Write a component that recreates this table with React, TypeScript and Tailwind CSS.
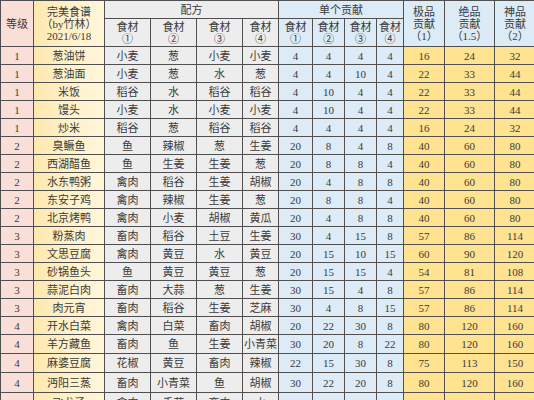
import React from "react";

type Row = [string, string, string, string, string, string, string, string, string, string, string, string, string];

const rows: Row[] = [
  ["1", "葱油饼", "小麦", "葱", "小麦", "小麦", "4", "4", "4", "4", "16", "24", "32"],
  ["1", "葱油面", "小麦", "葱", "水", "葱", "4", "4", "10", "4", "22", "33", "44"],
  ["1", "米饭", "稻谷", "水", "稻谷", "稻谷", "4", "10", "4", "4", "22", "33", "44"],
  ["1", "馒头", "小麦", "水", "小麦", "小麦", "4", "10", "4", "4", "22", "33", "44"],
  ["1", "炒米", "稻谷", "葱", "稻谷", "稻谷", "4", "4", "4", "4", "16", "24", "32"],
  ["2", "臭鳜鱼", "鱼", "辣椒", "葱", "生姜", "20", "8", "4", "8", "40", "60", "80"],
  ["2", "西湖醋鱼", "鱼", "生姜", "生姜", "葱", "20", "8", "8", "4", "40", "60", "80"],
  ["2", "水东鸭粥", "禽肉", "稻谷", "生姜", "胡椒", "20", "4", "8", "8", "40", "60", "80"],
  ["2", "东安子鸡", "禽肉", "辣椒", "生姜", "葱", "20", "8", "8", "4", "40", "60", "80"],
  ["2", "北京烤鸭", "禽肉", "小麦", "胡椒", "黄瓜", "20", "4", "8", "8", "40", "60", "80"],
  ["3", "粉蒸肉", "畜肉", "稻谷", "土豆", "生姜", "30", "4", "15", "8", "57", "86", "114"],
  ["3", "文思豆腐", "禽肉", "黄豆", "水", "黄豆", "20", "15", "10", "15", "60", "90", "120"],
  ["3", "砂锅鱼头", "鱼", "黄豆", "黄豆", "葱", "20", "15", "15", "4", "54", "81", "108"],
  ["3", "蒜泥白肉", "畜肉", "大蒜", "葱", "生姜", "30", "15", "4", "8", "57", "86", "114"],
  ["3", "肉元宵", "畜肉", "稻谷", "生姜", "芝麻", "30", "4", "8", "15", "57", "86", "114"],
  ["4", "开水白菜", "禽肉", "白菜", "畜肉", "胡椒", "20", "22", "30", "8", "80", "120", "160"],
  ["4", "羊方藏鱼", "畜肉", "鱼", "生姜", "小青菜", "30", "20", "8", "22", "80", "120", "160"],
  ["4", "麻婆豆腐", "花椒", "黄豆", "畜肉", "辣椒", "22", "15", "30", "8", "75", "113", "150"],
  ["4", "沔阳三蒸", "畜肉", "小青菜", "鱼", "胡椒", "30", "22", "20", "8", "80", "120", "160"],
  ["4", "飞龙汤", "禽肉", "香菇", "畜肉", "水", "20", "22", "30", "10", "82", "123", "164"],
];

const bgFor = (i: number) => {
  if (i === 0) return "bg-[#fadfd9]";
  if (i === 1) return "bg-gradient-to-r from-[#fde8ae] via-[#fff1c9] to-[#fff5da]";
  if (i < 6) return "bg-[#ededed]";
  if (i < 10) return "bg-[#ddebf7]";
  return "bg-[#ffe390]";
};

const cell = "flex items-center justify-center text-center whitespace-nowrap overflow-hidden";

export default function App() {
  return (
    <div className="w-[534px] h-[400px] overflow-hidden bg-white">
      <div className="grid w-max gap-px bg-[#505050] p-px grid-cols-[32px_70px_45px_45px_45px_35px_33px_31px_31px_26px_40px_49px_40px] grid-rows-[17px_27px_repeat(16,17px)_18px_18px_19px_20px] font-['Liberation_Serif','Noto_Sans_CJK_SC',serif] text-[11px] leading-[12px] text-[#3a3a3a]">
        <div className={`${cell} row-span-2 bg-[#fadfd9]`}>等级</div>
        <div className={`${cell} row-span-2 flex-col bg-gradient-to-r from-[#fde8ae] via-[#fff1c9] to-[#fff5da]`}>
          <span>完美食谱</span>
          <span>（by竹林）</span>
          <span>2021/6/18</span>
        </div>
        <div className={`${cell} col-span-4 bg-[#ededed]`}>配方</div>
        <div className={`${cell} col-span-4 bg-[#ddebf7]`}>单个贡献</div>
        <div className={`${cell} row-span-2 flex-col bg-[#ddebf7]`}>
          <span>极品</span>
          <span>贡献</span>
          <span>（1）</span>
        </div>
        <div className={`${cell} row-span-2 flex-col bg-[#ddebf7]`}>
          <span>绝品</span>
          <span>贡献</span>
          <span>（1.5）</span>
        </div>
        <div className={`${cell} row-span-2 flex-col bg-[#ddebf7]`}>
          <span>神品</span>
          <span>贡献</span>
          <span>（2）</span>
        </div>
        {["①", "②", "③", "④", "①", "②", "③", "④"].map((c, i) => (
          <div key={i} className={`${cell} flex-col pt-[1px] ${i < 4 ? "bg-[#ededed]" : "bg-[#ddebf7]"}`}>
            <span>食材</span>
            <span>{c}</span>
          </div>
        ))}
        {rows.map((r, ri) =>
          r.map((v, ci) => (
            <div key={`${ri}-${ci}`} className={`${cell} ${bgFor(ci)}`}>
              {v}
            </div>
          ))
        )}
      </div>
    </div>
  );
}
